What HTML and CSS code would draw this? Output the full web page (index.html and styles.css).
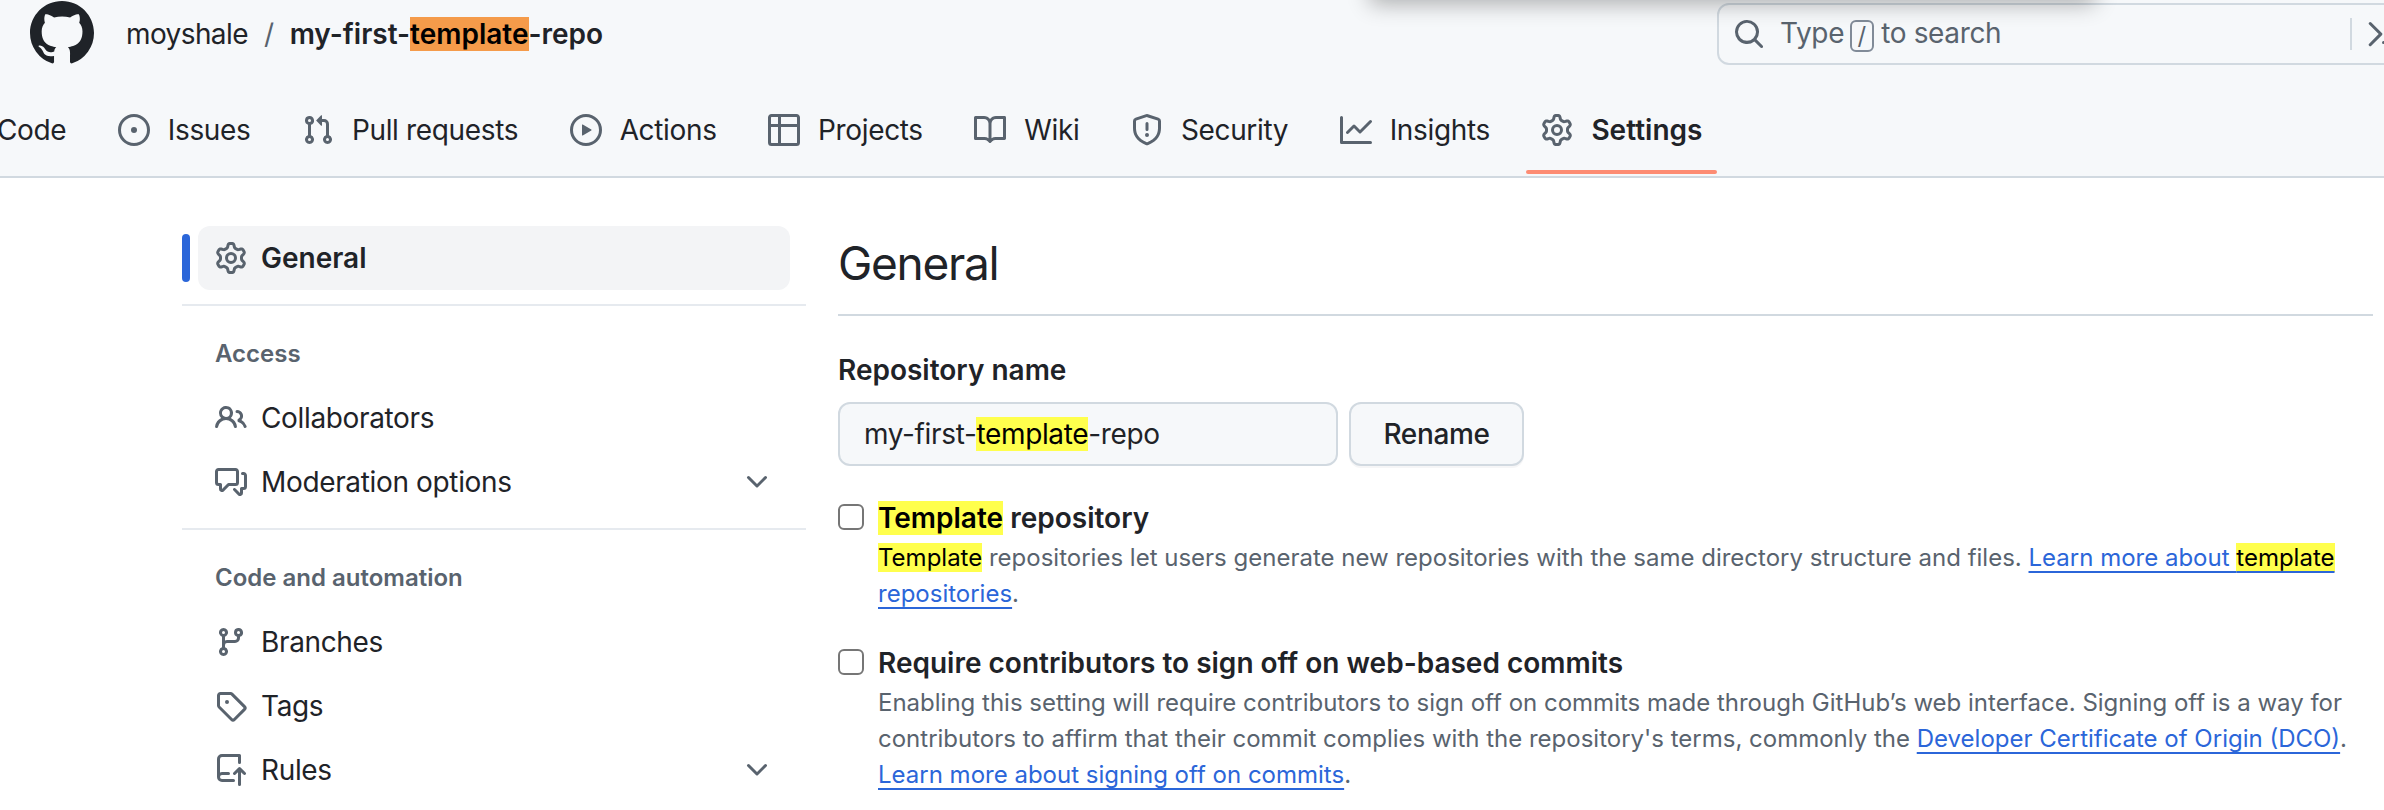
FILE: index.html
```html
<!DOCTYPE html>
<html lang="en">
<head>
  <meta charset="UTF-8" />
  <title>Settings · moyshale/my-first-template-repo</title>
  <link rel="stylesheet" href="styles.css">
</head>
<body>
  <svg class="sprite" aria-hidden="true">
    <symbol id="i-mark" viewBox="0 0 16 16"><path d="M8 0c4.42 0 8 3.58 8 8a8.013 8.013 0 0 1-5.45 7.59c-.4.08-.55-.17-.55-.38 0-.27.01-1.13.01-2.2 0-.75-.25-1.23-.54-1.48 1.78-.2 3.65-.88 3.65-3.95 0-.88-.31-1.59-.82-2.15.08-.2.36-1.02-.08-2.12 0 0-.67-.22-2.2.82-.64-.18-1.32-.27-2-.27-.68 0-1.36.09-2 .27-1.53-1.03-2.2-.82-2.2-.82-.44 1.1-.16 1.92-.08 2.12-.51.56-.82 1.28-.82 2.15 0 3.06 1.86 3.75 3.64 3.95-.23.2-.44.55-.51 1.07-.46.21-1.61.55-2.33-.66-.15-.24-.6-.83-1.23-.82-.67.01-.27.38.01.53.34.19.73.9.82 1.13.16.45.68 1.31 2.69.94 0 .67.01 1.3.01 1.49 0 .21-.15.45-.55.38A7.995 7.995 0 0 1 0 8c0-4.42 3.58-8 8-8Z"/></symbol>
    <symbol id="i-code" viewBox="0 0 16 16"><path d="m11.28 3.22 4.25 4.25a.75.75 0 0 1 0 1.06l-4.25 4.25a.749.749 0 0 1-1.275-.326.749.749 0 0 1 .215-.734L13.94 8l-3.72-3.72a.749.749 0 0 1 .326-1.275.749.749 0 0 1 .734.215Zm-6.56 0a.751.751 0 0 1 1.042.018.751.751 0 0 1 .018 1.042L2.06 8l3.72 3.72a.749.749 0 0 1-.326 1.275.749.749 0 0 1-.734-.215L.47 8.53a.75.75 0 0 1 0-1.06Z"/></symbol>
    <symbol id="i-issue" viewBox="0 0 16 16"><path d="M8 9.5a1.5 1.5 0 1 0 0-3 1.5 1.5 0 0 0 0 3Z"/><path d="M8 0a8 8 0 1 1 0 16A8 8 0 0 1 8 0ZM1.5 8a6.5 6.5 0 1 0 13 0 6.5 6.5 0 0 0-13 0Z"/></symbol>
    <symbol id="i-pull" viewBox="0 0 16 16"><path d="M1.5 3.25a2.25 2.25 0 1 1 3 2.122v5.256a2.251 2.251 0 1 1-1.5 0V5.372A2.25 2.25 0 0 1 1.5 3.25Zm5.677-.177L9.573.677A.25.25 0 0 1 10 .854V2.5h1A2.5 2.5 0 0 1 13.5 5v5.628a2.251 2.251 0 1 1-1.5 0V5a1 1 0 0 0-1-1h-1v1.646a.25.25 0 0 1-.427.177L7.177 3.427a.25.25 0 0 1 0-.354ZM3.75 2.5a.75.75 0 1 0 0 1.5.75.75 0 0 0 0-1.5Zm0 9.5a.75.75 0 1 0 0 1.5.75.75 0 0 0 0-1.5Zm8.25.75a.75.75 0 1 0 1.5 0 .75.75 0 0 0-1.5 0Z"/></symbol>
    <symbol id="i-play" viewBox="0 0 16 16"><path d="M8 0a8 8 0 1 1 0 16A8 8 0 0 1 8 0ZM1.5 8a6.5 6.5 0 1 0 13 0 6.5 6.5 0 0 0-13 0Zm4.879-2.773 4.264 2.559a.25.25 0 0 1 0 .428l-4.264 2.559A.25.25 0 0 1 6 10.559V5.442a.25.25 0 0 1 .379-.215Z"/></symbol>
    <symbol id="i-table" viewBox="0 0 16 16"><path d="M0 1.75C0 .784.784 0 1.75 0h12.5C15.216 0 16 .784 16 1.75v12.5A1.75 1.75 0 0 1 14.25 16H1.75A1.75 1.75 0 0 1 0 14.25ZM6.5 6.5v8h7.75a.25.25 0 0 0 .25-.25V6.5Zm8-1.5V1.75a.25.25 0 0 0-.25-.25H6.5V5Zm-13 1.5v7.75c0 .138.112.25.25.25H5v-8ZM5 5V1.5H1.75a.25.25 0 0 0-.25.25V5Z"/></symbol>
    <symbol id="i-book" viewBox="0 0 16 16"><path d="M0 1.75A.75.75 0 0 1 .75 1h4.253c1.227 0 2.317.59 3 1.501A3.743 3.743 0 0 1 11.006 1h4.245a.75.75 0 0 1 .75.75v10.5a.75.75 0 0 1-.75.75h-4.507a2.25 2.25 0 0 0-1.591.659l-.622.621a.75.75 0 0 1-1.06 0l-.622-.621A2.25 2.25 0 0 0 5.258 13H.75a.75.75 0 0 1-.75-.75Zm7.251 10.324.004-5.073-.002-2.253A2.25 2.25 0 0 0 5.003 2.5H1.5v9h3.757a3.75 3.75 0 0 1 1.994.574ZM8.755 4.75l-.004 7.322a3.752 3.752 0 0 1 1.992-.572H14.5v-9h-3.495a2.25 2.25 0 0 0-2.25 2.25Z"/></symbol>
    <symbol id="i-shield" viewBox="0 0 16 16"><path d="M7.467.133a1.748 1.748 0 0 1 1.066 0l5.25 1.68A1.75 1.75 0 0 1 15 3.48V7c0 1.566-.32 3.182-1.303 4.682-.983 1.498-2.585 2.813-5.032 3.855a1.697 1.697 0 0 1-1.33 0c-2.447-1.042-4.049-2.357-5.032-3.855C1.32 10.182 1 8.566 1 7V3.48a1.75 1.75 0 0 1 1.217-1.667Zm.61 1.429a.25.25 0 0 0-.153 0l-5.25 1.68a.25.25 0 0 0-.174.238V7c0 1.358.275 2.666 1.057 3.86.784 1.194 2.121 2.34 4.366 3.297a.196.196 0 0 0 .154 0c2.245-.956 3.582-2.104 4.366-3.298C13.225 9.666 13.5 8.36 13.5 7V3.48a.251.251 0 0 0-.174-.237l-5.25-1.68ZM8.75 4.75v3a.75.75 0 0 1-1.5 0v-3a.75.75 0 0 1 1.5 0ZM9 10.5a1 1 0 1 1-2 0 1 1 0 0 1 2 0Z"/></symbol>
    <symbol id="i-graph" viewBox="0 0 16 16"><path d="M1.5 1.75V13.5h13.75a.75.75 0 0 1 0 1.5H.75a.75.75 0 0 1-.75-.75V1.75a.75.75 0 0 1 1.5 0Zm14.28 2.53-5.25 5.25a.75.75 0 0 1-1.06 0L7 7.06 4.28 9.78a.751.751 0 0 1-1.042-.018.751.751 0 0 1-.018-1.042l3.25-3.25a.75.75 0 0 1 1.06 0L10 7.94l4.72-4.72a.751.751 0 0 1 1.042.018.751.751 0 0 1 .018 1.042Z"/></symbol>
    <symbol id="i-gear" viewBox="0 0 16 16"><path d="M8 0a8.2 8.2 0 0 1 .701.031C9.444.095 9.99.645 10.16 1.29l.288 1.107c.018.066.079.158.212.224.231.114.454.243.668.386.123.082.233.09.299.071l1.103-.303c.644-.176 1.392.021 1.82.63.27.385.506.792.704 1.218.315.675.111 1.422-.364 1.891l-.814.806c-.049.048-.098.147-.088.294.016.257.016.515 0 .772-.01.147.038.246.088.294l.814.806c.475.469.679 1.216.364 1.891a7.977 7.977 0 0 1-.704 1.217c-.428.61-1.176.807-1.82.63l-1.102-.302c-.067-.019-.177-.011-.3.071a5.909 5.909 0 0 1-.668.386c-.133.066-.194.158-.211.224l-.29 1.106c-.168.646-.715 1.196-1.458 1.26a8.006 8.006 0 0 1-1.402 0c-.743-.064-1.289-.614-1.458-1.26l-.289-1.106c-.018-.066-.079-.158-.212-.224a5.738 5.738 0 0 1-.668-.386c-.123-.082-.233-.09-.299-.071l-1.103.303c-.644.176-1.392-.021-1.82-.63a8.12 8.12 0 0 1-.704-1.218c-.315-.675-.111-1.422.363-1.891l.815-.806c.05-.048.098-.147.088-.294a6.214 6.214 0 0 1 0-.772c.01-.147-.038-.246-.088-.294l-.815-.806C.635 6.045.431 5.298.746 4.623a7.92 7.92 0 0 1 .704-1.217c.428-.61 1.176-.807 1.82-.63l1.102.302c.067.019.177.011.3-.071.214-.143.437-.272.668-.386.133-.066.194-.158.211-.224l.29-1.106C6.009.645 6.556.095 7.299.03 7.53.01 7.764 0 8 0Zm-.571 1.525c-.036.003-.108.036-.137.146l-.289 1.105c-.147.561-.549.967-.998 1.189-.173.086-.34.183-.5.29-.417.278-.97.423-1.529.27l-1.103-.303c-.109-.03-.175.016-.195.045-.22.312-.412.644-.573.99-.014.031-.021.11.059.19l.815.806c.411.406.562.957.53 1.456a4.709 4.709 0 0 0 0 .582c.032.499-.119 1.05-.53 1.456l-.815.806c-.081.08-.073.159-.059.19.162.346.353.677.573.989.02.03.085.076.195.046l1.102-.303c.56-.153 1.113-.008 1.53.27.161.107.328.204.501.29.447.222.85.629.997 1.189l.289 1.105c.029.109.101.143.137.146a6.6 6.6 0 0 0 1.142 0c.036-.003.108-.036.137-.146l.289-1.105c.147-.561.549-.967.998-1.189.173-.086.34-.183.5-.29.417-.278.97-.423 1.529-.27l1.103.303c.109.029.175-.016.195-.045.22-.313.411-.644.573-.99.014-.031.021-.11-.059-.19l-.815-.806c-.411-.406-.562-.957-.53-1.456a4.709 4.709 0 0 0 0-.582c-.032-.499.119-1.05.53-1.456l.815-.806c.081-.08.073-.159.059-.19a6.464 6.464 0 0 0-.573-.989c-.02-.03-.085-.076-.195-.046l-1.102.303c-.56.153-1.113.008-1.53-.27a4.44 4.44 0 0 0-.501-.29c-.447-.222-.85-.629-.997-1.189l-.289-1.105c-.029-.11-.101-.143-.137-.146a6.6 6.6 0 0 0-1.142 0ZM11 8a3 3 0 1 1-6 0 3 3 0 0 1 6 0ZM9.5 8a1.5 1.5 0 1 0-3.001.001A1.5 1.5 0 0 0 9.5 8Z"/></symbol>
    <symbol id="i-people" viewBox="0 0 16 16"><path d="M2 5.5a3.5 3.5 0 1 1 5.898 2.549 5.508 5.508 0 0 1 3.034 4.084.75.75 0 1 1-1.482.235 4 4 0 0 0-7.9 0 .75.75 0 0 1-1.482-.236A5.507 5.507 0 0 1 3.102 8.05 3.493 3.493 0 0 1 2 5.5ZM11 4a3.001 3.001 0 0 1 2.22 5.018 5.01 5.01 0 0 1 2.56 3.012.749.749 0 0 1-.885.954.752.752 0 0 1-.549-.514 3.507 3.507 0 0 0-2.522-2.372.75.75 0 0 1-.574-.73v-.352a.75.75 0 0 1 .416-.672A1.5 1.5 0 0 0 11 5.5.75.75 0 0 1 11 4Zm-5.5-.5a2 2 0 1 0-.001 3.999A2 2 0 0 0 5.5 3.5Z"/></symbol>
    <symbol id="i-discuss" viewBox="0 0 16 16"><path d="M1.75 1h8.5c.966 0 1.75.784 1.75 1.75v5.5A1.75 1.75 0 0 1 10.25 10H7.061l-2.574 2.573A1.458 1.458 0 0 1 2 11.543V10h-.25A1.75 1.75 0 0 1 0 8.25v-5.5C0 1.784.784 1 1.75 1ZM1.5 2.75v5.5c0 .138.112.25.25.25h1a.75.75 0 0 1 .75.75v2.19l2.72-2.72a.749.749 0 0 1 .53-.22h3.5a.25.25 0 0 0 .25-.25v-5.5a.25.25 0 0 0-.25-.25h-8.5a.25.25 0 0 0-.25.25Zm13 2a.25.25 0 0 0-.25-.25h-.5a.75.75 0 0 1 0-1.5h.5c.966 0 1.75.784 1.75 1.75v5.5A1.75 1.75 0 0 1 14.25 12H14v1.543a1.458 1.458 0 0 1-2.487 1.03L9.22 12.28a.749.749 0 0 1 .326-1.275.749.749 0 0 1 .734.215l2.22 2.22v-2.19a.75.75 0 0 1 .75-.75h1a.25.25 0 0 0 .25-.25Z"/></symbol>
    <symbol id="i-branch" viewBox="0 0 16 16"><path d="M9.5 3.25a2.25 2.25 0 1 1 3 2.122V6A2.5 2.5 0 0 1 10 8.5H6a1 1 0 0 0-1 1v1.128a2.251 2.251 0 1 1-1.5 0V5.372a2.25 2.25 0 1 1 1.5 0v1.836A2.493 2.493 0 0 1 6 7h4a1 1 0 0 0 1-1v-.628A2.25 2.25 0 0 1 9.5 3.25Zm-6 0a.75.75 0 1 0 1.5 0 .75.75 0 0 0-1.5 0Zm8.25-.75a.75.75 0 1 0 0 1.5.75.75 0 0 0 0-1.5ZM4.25 12a.75.75 0 1 0 0 1.5.75.75 0 0 0 0-1.5Z"/></symbol>
    <symbol id="i-tag" viewBox="0 0 16 16"><path d="M1 7.775V2.75C1 1.784 1.784 1 2.75 1h5.025c.464 0 .91.184 1.238.513l6.25 6.25a1.75 1.75 0 0 1 0 2.474l-5.026 5.026a1.75 1.75 0 0 1-2.474 0l-6.25-6.25A1.75 1.75 0 0 1 1 7.775Zm1.5 0c0 .066.026.13.073.177l6.25 6.25a.25.25 0 0 0 .354 0l5.025-5.025a.25.25 0 0 0 0-.354l-6.25-6.25a.25.25 0 0 0-.177-.073H2.75a.25.25 0 0 0-.25.25ZM6 5a1 1 0 1 1 0 2 1 1 0 0 1 0-2Z"/></symbol>
    <symbol id="i-rules" viewBox="0 0 16 16"><path d="M1 2.5A2.5 2.5 0 0 1 3.5 0h8.75a.75.75 0 0 1 .75.75v3.5a.75.75 0 0 1-1.5 0V1.5h-8a1 1 0 0 0-1 1v6.708A2.493 2.493 0 0 1 3.5 9h3.25a.75.75 0 0 1 0 1.5H3.5a1 1 0 0 0 0 2h5.75a.75.75 0 0 1 0 1.5H3.5A2.5 2.5 0 0 1 1 11.5Zm13.23 7.79h-.001l-1.224-1.224v6.184a.75.75 0 0 1-1.5 0V9.066L10.28 10.29a.75.75 0 0 1-1.06-1.061l2.505-2.504a.75.75 0 0 1 1.06 0L15.29 9.23a.751.751 0 0 1-.018 1.042.751.751 0 0 1-1.042.018Z"/></symbol>
    <symbol id="i-search" viewBox="0 0 16 16"><path d="M10.68 11.74a6 6 0 0 1-7.922-8.982 6 6 0 0 1 8.982 7.922l3.04 3.04a.749.749 0 0 1-.326 1.275.749.749 0 0 1-.734-.215ZM11.5 7a4.499 4.499 0 1 0-8.997 0A4.499 4.499 0 0 0 11.5 7Z"/></symbol>
    <symbol id="i-chevron" viewBox="0 0 16 16"><path d="M12.78 5.22a.749.749 0 0 1 0 1.06l-4.25 4.25a.749.749 0 0 1-1.06 0L3.22 6.28a.749.749 0 1 1 1.06-1.06L8 8.939l3.72-3.719a.749.749 0 0 1 1.06 0Z"/></symbol>
    <symbol id="i-palette" viewBox="0 0 16 16"><path d="m6.354 8.04-4.773 4.773a.75.75 0 1 0 1.061 1.06L7.945 8.57a.75.75 0 0 0 0-1.06L2.642 2.206a.75.75 0 0 0-1.06 1.061L6.353 8.04ZM8.75 11.5a.75.75 0 0 0 0 1.5h5.5a.75.75 0 0 0 0-1.5h-5.5Z"/></symbol>
  </svg>

  <div class="topShadow"></div>

  <header class="header">
    <div class="topRow">
      <svg class="logo"><use href="#i-mark"/></svg>
      <div class="crumbs">
        <span class="owner">moyshale</span>
        <span class="slash">/</span>
        <span class="repo">my-first-<mark class="hitOrange">template</mark>-repo</span>
      </div>
      <div class="search">
        <svg class="icon"><use href="#i-search"/></svg>
        <span class="searchText">Type <kbd class="slashKey">/</kbd> to search</span>
        <span class="searchDivider"></span>
        <svg class="icon"><use href="#i-palette"/></svg>
      </div>
    </div>
    <nav class="tabs">
      <a class="tab"><svg class="icon"><use href="#i-code"/></svg>Code</a>
      <a class="tab"><svg class="icon"><use href="#i-issue"/></svg>Issues</a>
      <a class="tab"><svg class="icon"><use href="#i-pull"/></svg>Pull requests</a>
      <a class="tab"><svg class="icon"><use href="#i-play"/></svg>Actions</a>
      <a class="tab"><svg class="icon"><use href="#i-table"/></svg>Projects</a>
      <a class="tab"><svg class="icon"><use href="#i-book"/></svg>Wiki</a>
      <a class="tab"><svg class="icon"><use href="#i-shield"/></svg>Security</a>
      <a class="tab"><svg class="icon"><use href="#i-graph"/></svg>Insights</a>
      <a class="tab tabActive"><svg class="icon"><use href="#i-gear"/></svg>Settings</a>
    </nav>
  </header>

  <main class="layout">
    <aside class="sidebar">
      <a class="sideItem sideActive"><svg class="icon"><use href="#i-gear"/></svg>General</a>
      <div class="sideDivider"></div>
      <h3 class="sideHeading">Access</h3>
      <a class="sideItem"><svg class="icon"><use href="#i-people"/></svg>Collaborators</a>
      <a class="sideItem"><svg class="icon"><use href="#i-discuss"/></svg>Moderation options<svg class="icon sideChevron"><use href="#i-chevron"/></svg></a>
      <div class="sideDivider"></div>
      <h3 class="sideHeading">Code and automation</h3>
      <a class="sideItem"><svg class="icon"><use href="#i-branch"/></svg>Branches</a>
      <a class="sideItem"><svg class="icon"><use href="#i-tag"/></svg>Tags</a>
      <a class="sideItem"><svg class="icon"><use href="#i-rules"/></svg>Rules<svg class="icon sideChevron"><use href="#i-chevron"/></svg></a>
    </aside>

    <section class="content">
      <h2 class="title">General</h2>

      <label class="fieldLabel">Repository name</label>
      <div class="renameRow">
        <div class="textInput">my-first-<mark class="hit">template</mark>-repo</div>
        <button class="btn">Rename</button>
      </div>

      <div class="option optionFirst">
        <input type="checkbox" class="check" />
        <div>
          <div class="optionTitle"><mark class="hit">Template</mark> repository</div>
          <p class="optionNote"><mark class="hit">Template</mark> repositories let users generate new repositories with the same directory structure and files. <a class="link">Learn more about <mark class="hit">template</mark> repositories</a>.</p>
        </div>
      </div>

      <div class="option">
        <input type="checkbox" class="check" />
        <div>
          <div class="optionTitle">Require contributors to sign off on web-based commits</div>
          <p class="optionNote">Enabling this setting will require contributors to sign off on commits made through GitHub’s web interface. Signing off is a way for contributors to affirm that their commit complies with the repository's terms, commonly the <a class="link">Developer Certificate of Origin (DCO)</a>. <a class="link">Learn more about signing off on commits</a>.</p>
        </div>
      </div>
    </section>
  </main>
</body>
</html>
```

FILE: styles.css
```css
body, html {
  margin: 0;
  padding: 0;
  height: 100%;
  overflow: hidden;
  background: #fff;
  color: #1f2328;
  font-family: Inter, "Liberation Sans", sans-serif;
  font-size: 28px;
  letter-spacing: -0.35px;
}
.sprite {
  display: none;
}
.icon {
  width: 32px;
  height: 32px;
  flex: none;
  fill: #59636e;
}
mark {
  color: #000;
}
.hit {
  background: #ffff4d;
}
.hitOrange {
  background: #f59b4a;
}

/* shadow of something sitting above the top of the shot */
.topShadow {
  position: absolute;
  top: -40px;
  left: 1370px;
  width: 725px;
  height: 40px;
  box-shadow: 0 4px 22px rgba(0, 0, 0, 0.3);
  z-index: 5;
}

.header {
  background: #f6f8fa;
  border-bottom: 2px solid #d1d9e0;
  height: 176px;
}
.topRow {
  display: flex;
  align-items: center;
  height: 62px;
  padding: 3px 0 0 30px;
}
.logo {
  width: 64px;
  height: 64px;
  margin-top: -2px;
  fill: #1f2328;
  flex: none;
}
.crumbs {
  display: flex;
  align-items: center;
  margin-left: 32px;
}
.owner {
  color: #1f2328;
  letter-spacing: -0.6px;
}
.slash {
  color: #59636e;
  margin: 0 16px;
}
.repo {
  font-weight: 600;
  letter-spacing: 0;
}
.search {
  display: flex;
  align-items: center;
  box-sizing: border-box;
  height: 62px;
  width: 697px;
  margin-left: auto;
  margin-right: -30px;
  padding: 0 14px;
  background: #f6f8fa;
  border: 2px solid #d1d9e0;
  border-radius: 12px;
  color: #59636e;
}
.searchText {
  margin-left: 15px;
}
.slashKey {
  display: inline-block;
  box-sizing: border-box;
  width: 24px;
  height: 32px;
  line-height: 28px;
  margin: 0 0 0 -2px;
  text-align: center;
  border: 2px solid #818b98;
  border-radius: 6px;
  font-family: inherit;
  font-size: 24px;
  vertical-align: middle;
}
.searchDivider {
  width: 2px;
  height: 32px;
  margin-left: auto;
  margin-right: 14px;
  background: #d1d9e0;
}

.tabs {
  display: flex;
  align-items: center;
  height: 84px;
  margin: 23px 0 0 -68px;
  gap: 21.5px;
}
.tab {
  position: relative;
  display: flex;
  align-items: center;
  gap: 18px;
  height: 84px;
  padding: 0 15px;
  white-space: nowrap;
}
.tabActive {
  font-weight: 600;
  letter-spacing: 0;
}
.tabActive::after {
  content: "";
  position: absolute;
  left: 0;
  right: 0;
  bottom: -2px;
  height: 4px;
  background: #fd8c73;
  border-radius: 2px;
}

.layout {
  display: grid;
  grid-template-columns: 624px 1535px;
  column-gap: 32px;
  padding: 48px 0 0 182px;
}
.sideItem {
  position: relative;
  display: flex;
  align-items: center;
  gap: 14px;
  box-sizing: border-box;
  width: 592px;
  height: 64px;
  margin-left: 16px;
  padding: 0 17px 0 17px;
  border-radius: 12px;
}
.sideActive {
  background: #f3f4f6;
  font-weight: 600;
  letter-spacing: 0;
}
.sideActive::before {
  content: "";
  position: absolute;
  left: -16px;
  top: 8px;
  width: 8px;
  height: 48px;
  background: #2b66d9;
  border-radius: 6px;
}
.sideChevron {
  margin-left: auto;
}
.sideDivider {
  height: 2px;
  margin-top: 14px;
  background: #e6eaef;
}
.sideHeading {
  margin: 32px 0 16px 33px;
  font-size: 24px;
  line-height: 32px;
  font-weight: 600;
  letter-spacing: 0;
  color: #59636e;
}

.title {
  margin: 0;
  padding: 7px 0 21px;
  border-bottom: 2px solid #d1d9e0;
  font-size: 46px;
  line-height: 60px;
  font-weight: 400;
  letter-spacing: -1.3px;
}
.fieldLabel {
  display: block;
  margin-top: 36px;
  line-height: 36px;
  font-weight: 600;
  letter-spacing: 0;
}
.renameRow {
  display: flex;
  gap: 11px;
  margin-top: 14px;
}
.textInput {
  display: flex;
  align-items: center;
  white-space: pre;
  box-sizing: border-box;
  width: 500px;
  height: 64px;
  padding: 0 24px;
  background: #f6f8fa;
  border: 2px solid #d1d9e0;
  border-radius: 12px;
}
.btn {
  box-sizing: border-box;
  width: 175px;
  height: 64px;
  background: #f6f8fa;
  border: 2px solid #d1d9e0;
  border-radius: 12px;
  box-shadow: 0 2px 0 rgba(31, 35, 40, 0.04);
  color: #1f2328;
  font: inherit;
  font-weight: 500;
  letter-spacing: inherit;
}
.option {
  display: flex;
  gap: 14px;
  margin-top: 33px;
}
.optionFirst {
  margin-top: 34px;
}
.check {
  appearance: none;
  box-sizing: border-box;
  width: 26px;
  height: 26px;
  margin: 4px 0 0;
  background: #fff;
  border: 2px solid #767676;
  border-radius: 6px;
  flex: none;
}
.optionTitle {
  line-height: 36px;
  font-weight: 600;
  letter-spacing: 0;
}
.optionNote {
  margin: 4px 0 0;
  font-size: 24px;
  line-height: 36px;
  letter-spacing: 0;
  color: #59636e;
}
.link {
  color: #2b66d9;
  text-decoration: underline;
  text-decoration-thickness: 2px;
  text-underline-offset: 5px;
}
```
